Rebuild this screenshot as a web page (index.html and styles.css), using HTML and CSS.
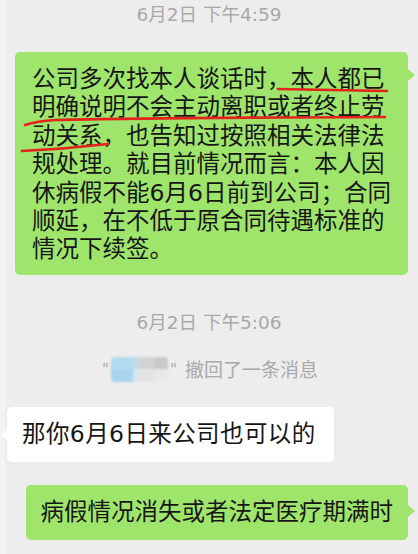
FILE: index.html
```html
<!DOCTYPE html>
<html lang="zh-CN">
<head>
<meta charset="utf-8">
<title>聊天记录</title>
<link rel="stylesheet" href="styles.css">
</head>
<body>
<div class="chat">
  <div class="time time-first">6月2日 下午4:59</div>

  <div class="row row-right">
    <div class="bubble bubble-green bubble-long">公司多次找本人谈话时，本人都已明确说明不会主动离职或者终止劳动关系，也告知过按照相关法律法规处理。就目前情况而言：本人因休病假不能6月6日前到公司；合同顺延，在不低于原合同待遇标准的情况下续签。<svg class="marks" width="393" height="223" viewBox="0 0 393 223"><path d="M263 37 Q320 38 372 39" /><path d="M10 73 Q22 69 40 68 Q120 66 370 65" /><path d="M7 99 Q50 97 93 92" /></svg></div>
  </div>

  <div class="time time-second">6月2日 下午5:06</div>

  <div class="recall">
    <span class="quote">"</span><span class="blurred"><i class="b1"></i><i class="b2"></i><i class="b3"></i><i class="b4"></i><i class="b5"></i><i class="b6"></i><i class="b7"></i><i class="b8"></i></span><span class="quote">"</span><span class="recall-text">撤回了一条消息</span>
  </div>

  <div class="row row-left">
    <div class="bubble bubble-white">那你6月6日来公司也可以的</div>
  </div>

  <div class="row row-right">
    <div class="bubble bubble-green bubble-short">病假情况消失或者法定医疗期满时</div>
  </div>
</div>
</body>
</html>
```

FILE: styles.css
```css
html, body {
  margin: 0;
  padding: 0;
  background: #ededed;
}

body {
  width: 418px;
  height: 554px;
  overflow: hidden;
  font-family: "DejaVu Sans", "Noto Sans CJK SC", sans-serif;
}

.chat {
  display: flex;
  flex-direction: column;
  height: 554px;
  box-sizing: border-box;
  border-left: 5px solid #f3f3f3;
}

.time {
  text-align: center;
  font-size: 18.5px;
  line-height: 24px;
  color: #a9a9a9;
  margin-right: 5px;
}

.time-first {
  margin-top: 3px;
}

.time-second {
  margin-top: 36px;
}

.row {
  display: flex;
}

.row-right {
  justify-content: flex-end;
  padding-right: 10px;
}

.row-left {
  justify-content: flex-start;
  padding-left: 2px;
  margin-top: 25px;
}

.bubble {
  position: relative;
  font-size: 23.5px;
  color: #161616;
  border-radius: 5px;
  box-sizing: border-box;
}

.bubble-green {
  background: #9fe56c;
}

.bubble-white {
  background: #ffffff;
  padding: 13px 18px 14px 15px;
  line-height: 28px;
  letter-spacing: 0.4px;
}

.bubble-long {
  margin-top: 25px;
  width: 393px;
  padding: 13px 16px 11px 17px;
  line-height: 28.4px;
}

.bubble-short {
  margin-top: 23px;
  padding: 13px 15px 14px 15px;
  line-height: 28px;
}

.bubble-green::after {
  content: "";
  position: absolute;
  right: -7px;
  top: 20px;
  border-style: solid;
  border-width: 6px 0 6px 7px;
  border-color: transparent transparent transparent #9fe56c;
}

.bubble-long::after {
  top: 17px;
}

.bubble-white::before {
  content: "";
  position: absolute;
  left: -6px;
  top: 22px;
  border-style: solid;
  border-width: 6px 7px 6px 0;
  border-color: transparent #ffffff transparent transparent;
}

.marks {
  position: absolute;
  left: 0;
  top: 0;
  pointer-events: none;
}

.marks path {
  fill: none;
  stroke: #e3231c;
  stroke-width: 2.6;
  stroke-linecap: round;
}

.recall {
  display: flex;
  align-items: center;
  justify-content: center;
  margin-top: 23px;
  margin-right: 5px;
  height: 24px;
  font-size: 19px;
  color: #a9a9a9;
}

.quote {
  font-size: 15px;
  line-height: 24px;
  margin: 0 2px;
}

.blurred {
  display: grid;
  grid-template-columns: 22px 6px 15px 14px;
  grid-template-rows: 12px 13px;
  filter: blur(1.2px);
  border-radius: 4px;
  overflow: hidden;
}

.blurred i {
  display: block;
}

.b1 { background: #b3dbef; }
.b2 { background: #c4dbe6; }
.b3 { background: #d3d3d3; }
.b4 { background: #c9c9c9; }
.b5 { background: #a8d4ec; }
.b6 { background: #d7e4ea; }
.b7 { background: #e3e3e3; }
.b8 { background: #e8e8e8; }

.recall-text {
  margin-left: 6px;
  line-height: 24px;
}
```
